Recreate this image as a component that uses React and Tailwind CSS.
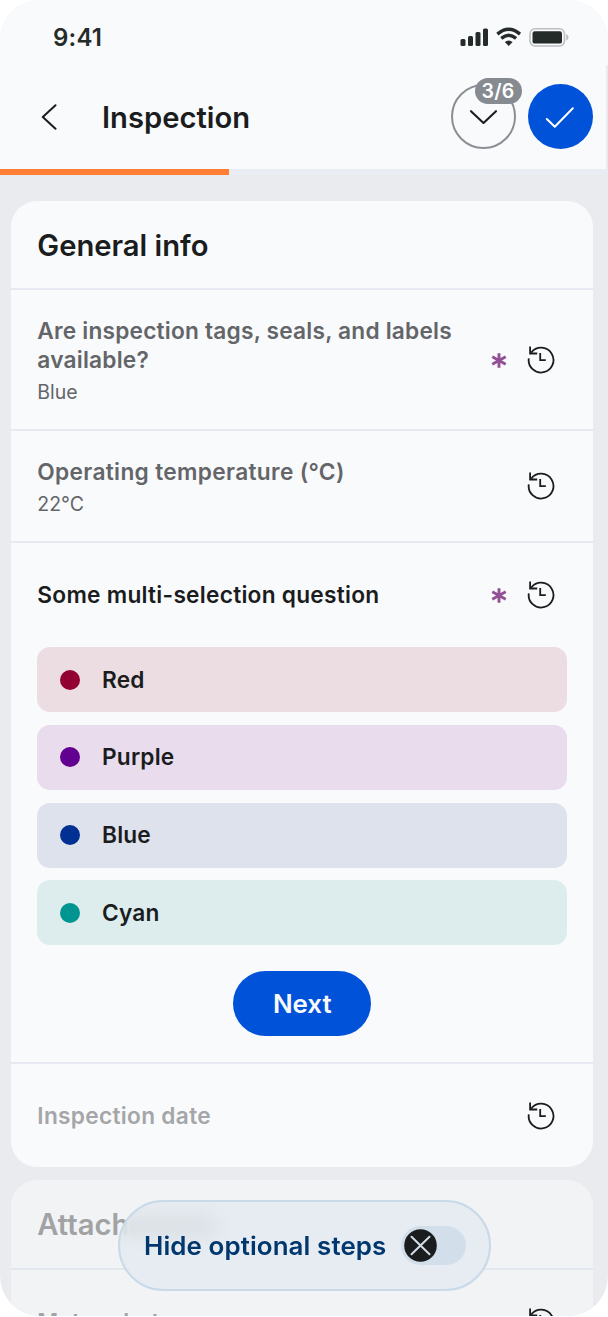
import React from "react";

function HistoryIcon({ className = "" }) {
  return (
    <svg className={`h-[30px] w-[30px] shrink-0 ${className}`} viewBox="0 0 30 30" fill="none" stroke="#1b1c1e" strokeWidth="1.8">
      <path d="M2.8 13.3A12.4 12.4 0 1 0 5.2 7.6" />
      <path d="M4.1 1.4V8.5H11.2M14.2 7.9V15.2H19.8" />
    </svg>
  );
}

function Asterisk() {
  return (
    <svg className="h-4 w-4 shrink-0" viewBox="0 0 16 16" fill="none" stroke="#924f96" strokeWidth="2.9">
      <path d="M8 1.2V15.8M1.3 4.8L14.7 12.2M14.7 4.8L1.3 12.2" />
    </svg>
  );
}

function Option({ label, bg, dot }) {
  return (
    <div className={`flex h-[65px] items-center rounded-[13px] pl-[22.5px] ${bg}`}>
      <span className={`h-5 w-5 rounded-full ${dot}`} />
      <span className="ml-[22.2px] pb-px text-[22.7px] font-semibold leading-[29px] tracking-[.2px]">{label}</span>
    </div>
  );
}

function StatusBar() {
  return (
    <div className="flex h-[65px] items-start justify-between pl-[53px] pr-[38px]">
      <span className="mt-[23px] text-[24px] font-semibold leading-[30px] tracking-[.2px] text-[#252b29]">9:41</span>
      <svg className="mt-[26px] h-[22px] w-[110px]" viewBox="0 0 110 22" fill="none">
        <g fill="#252b29">
          <rect x="0.5" y="13" width="5" height="7" rx="1.5" />
          <rect x="8" y="10" width="5" height="10" rx="1.5" />
          <rect x="15.5" y="6" width="5" height="14" rx="1.5" />
          <rect x="23" y="2.5" width="5" height="17.5" rx="1.5" />
          <path d="M44.8 16 48.7 20 52.6 16Q48.7 12.9 44.8 16Z" />
        </g>
        <path d="M37.4 8.1Q48.7-1.5 60 8.1M41.3 12.4Q48.7 6.2 56.1 12.4" stroke="#252b29" strokeWidth="3.4" />
        <rect x="70" y="2.8" width="34.5" height="17.2" rx="5" stroke="#bdbfc1" strokeWidth="1.6" />
        <rect x="72.5" y="5.2" width="29.5" height="12.4" rx="2.2" fill="#252b29" />
        <path d="M106.2 8.3Q108.5 9 108.5 11.3T106.2 14.5Z" fill="#bdbfc1" />
      </svg>
    </div>
  );
}

function Header() {
  return (
    <div className="mr-[2px] flex h-[103.5px] items-start bg-[#f9fafc] pl-[38px] pr-[12.8px]">
      <svg className="mt-[39px] h-[26px] w-[22px]" viewBox="0 0 22 26" fill="none" stroke="#1b1c1e" strokeWidth="2" strokeLinecap="round" strokeLinejoin="round">
        <path d="M17.5 1.2 4.8 13 17.5 24.8" />
      </svg>
      <h1 className="ml-[42px] mt-[34px] flex-1 text-[29.2px] font-semibold leading-[38px]">Inspection</h1>
      <button className="relative mt-[19px] h-[65px] w-[65px] rounded-full border-2 border-[#8a8f95]">
        <svg className="h-full w-full" viewBox="0 0 61 61" fill="none" stroke="#1b1c1e" strokeWidth="2.1" strokeLinecap="round" strokeLinejoin="round">
          <path d="M18 25.2 30.5 37 43 25.2" />
        </svg>
        <span className="absolute left-[22px] top-[-8px] flex h-[26px] w-[47px] items-center justify-center rounded-full bg-[#868b91] pt-px text-[19.5px] font-semibold tracking-[.3px] text-white">3/6</span>
      </button>
      <button className="ml-[12.7px] mt-[19px] h-[65px] w-[65px] rounded-full bg-[#0052d9]">
        <svg className="h-full w-full" viewBox="0 0 65 65" fill="none" stroke="#fff" strokeWidth="2" strokeLinecap="round" strokeLinejoin="round">
          <path d="M18.8 35 26.8 42.8 44.8 24.2" />
        </svg>
      </button>
    </div>
  );
}

export default function App() {
  return (
    <div className="h-[1317px] w-[608px] overflow-hidden bg-white font-['Inter',sans-serif] text-[#1b1c1e]">
      <div className="relative h-[1316px] overflow-hidden rounded-[40px] bg-[#eaebef]">
        <div className="bg-[#f9fafc]"><StatusBar /></div>
        <Header />
        <div className="h-[6.5px] bg-[#e9edf3]">
          <div className="h-full w-[228.7px] bg-[#ff7e33]" />
        </div>

        <main className="ml-[11.3px] mt-[26px] w-[582px]">
          <section className="h-[966px] rounded-[26px] bg-[#f9fafc]">
            <div className="h-[89px] border-b-2 border-[#e6e9f1] px-[26px] pt-[26px]">
              <h2 className="text-[29.2px] font-semibold leading-[38px]">General info</h2>
            </div>
            <div className="flex h-[141px] items-center border-b-2 border-[#e6e9f1] pl-[26px] pr-[37px]">
              <div className="flex-1 pt-[3px] text-[#636568]">
                <p className="whitespace-nowrap text-[22.7px] font-semibold leading-[29px] tracking-[.21px]">Are inspection tags, seals, and labels<br />available?</p>
                <p className="mt-[4px] text-[19.5px] leading-[28px]">Blue</p>
              </div>
              <Asterisk />
              <HistoryIcon className="ml-[19px]" />
            </div>
            <div className="flex h-[112px] items-center border-b-2 border-[#e6e9f1] pl-[26px] pr-[37px]">
              <div className="flex-1 pt-[3px] text-[#636568]">
                <p className="text-[22.7px] font-semibold leading-[29px] tracking-[.33px]">Operating temperature (°C)</p>
                <p className="mt-[4px] text-[19.5px] leading-[28px]">22°C</p>
              </div>
              <HistoryIcon />
            </div>
            <div className="h-[521px] border-b-2 border-[#e6e9f1] px-[26px]">
              <div className="flex h-[104px] items-center pr-[11px]">
                <p className="flex-1 pb-px text-[22.7px] font-semibold leading-[29px] tracking-[.26px]">Some multi-selection question</p>
                <Asterisk />
                <HistoryIcon className="ml-[19px]" />
              </div>
              <div className="flex flex-col gap-[12.8px]">
                <Option label="Red" bg="bg-[#ecdde2]" dot="bg-[#910030]" />
                <Option label="Purple" bg="bg-[#e8dced]" dot="bg-[#62008f]" />
                <Option label="Blue" bg="bg-[#dee2ed]" dot="bg-[#003092]" />
                <Option label="Cyan" bg="bg-[#ddedee]" dot="bg-[#009590]" />
              </div>
              <button className="mx-auto mt-[26px] flex h-[65px] w-[138px] items-center justify-center rounded-full bg-[#0052d9] pt-[2px] text-[25.9px] font-semibold text-[#f9fafc]">Next</button>
            </div>
            <div className="flex h-[103px] items-center pl-[26px] pr-[37px]">
              <p className="flex-1 text-[22.7px] font-semibold leading-[29px] tracking-[.3px] text-[#a5a6a8]">Inspection date</p>
              <HistoryIcon />
            </div>
          </section>

          <section className="mt-[13px] h-[200px] rounded-t-[26px] bg-[#f1f3f5]">
            <div className="h-[89.5px] border-b-2 border-[#e1e7ee] px-[26px] pt-[26px]">
              <h2 className="text-[29.2px] font-semibold leading-[38px] text-[#a0a2a4]">Attachments</h2>
            </div>
            <div className="flex items-start pl-[26px] pr-[37px] pt-[37px]">
              <p className="flex-1 text-[22.7px] font-semibold leading-[29px] tracking-[.23px] text-[#a0a2a4]">Meter photo</p>
              <HistoryIcon />
            </div>
          </section>
        </main>

        <div className="absolute left-[118px] top-[1199.5px] flex h-[91px] w-[373px] items-center rounded-full border-2 border-[#c9d9e8] bg-[#dfe8ef]/60 pl-[24px] pt-px backdrop-blur-[10px]">
          <span className="w-[256.5px] whitespace-nowrap text-[25.9px] font-semibold leading-[34px] tracking-[.1px] text-[#00376f]">Hide optional steps</span>
          <span className="flex h-[39px] w-[65px] items-center rounded-full bg-[#d2deea] pl-[3px]">
            <svg className="h-[33px] w-[33px]" viewBox="0 0 33 33" fill="none">
              <circle cx="16.5" cy="16.5" r="16.3" fill="#1b1c1e" />
              <path d="M7.5 7.8 25.5 25.2M25.5 7.8 7.5 25.2" stroke="#d2deea" strokeWidth="2" strokeLinecap="round" />
            </svg>
          </span>
        </div>
      </div>
    </div>
  );
}
